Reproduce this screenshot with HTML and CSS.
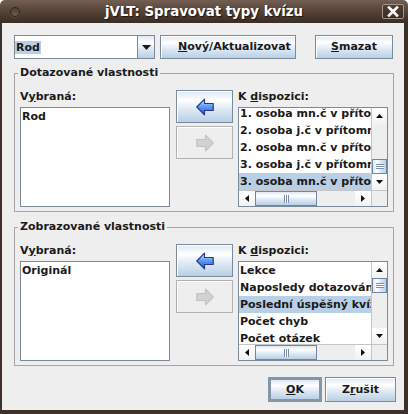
FILE: index.html
```html
<!DOCTYPE html>
<html>
<head>
<meta charset="utf-8">
<link rel="stylesheet" href="styles.css">
</head>
<body>
<div class="window">
  <div class="titlebar">
    <div class="tb-left"><span class="menu-dot"></span></div>
    <div class="title">jVLT: Spravovat typy kvízu</div>
    <div class="tb-right">
      <span class="close"><svg width="12" height="11" viewBox="0 0 12 11"><path d="M2 1.5 L10 9.5 M10 1.5 L2 9.5" stroke="#fff" stroke-width="2.6" stroke-linecap="square"/></svg></span>
    </div>
  </div>
  <div class="content">
    <div class="toolbar">
      <div class="combo">
        <div class="combo-field"><span class="sel-text">Rod</span></div>
        <div class="combo-arrow"><svg width="9" height="5" viewBox="0 0 9 5"><path d="M0 0H9L4.5 5Z" fill="#1a1a1a"/></svg></div>
      </div>
      <button class="btn btn-new"><u>N</u>ový/Aktualizovat</button>
      <button class="btn btn-del"><u>S</u>mazat</button>
    </div>

    <fieldset class="group">
      <legend>Dotazované vlastnosti</legend>
      <div class="group-body">
        <div class="col">
          <div class="col-label">V<u>y</u>braná:</div>
          <div class="list"><div class="row">Rod</div></div>
        </div>
        <div class="movers">
          <button class="mover">
            <svg width="18" height="18" viewBox="0 0 18 18"><defs><linearGradient id="ga1" x1="0" y1="0" x2="0" y2="1"><stop offset="0" stop-color="#f2f7ff"/><stop offset="0.4" stop-color="#6aa6f2"/><stop offset="1" stop-color="#1d5fcc"/></linearGradient></defs><path d="M0.8 9 L8.5 1.2 V5.5 H17.2 V12.5 H8.5 V16.8 Z" fill="url(#ga1)" stroke="#26339b" stroke-width="1.2" stroke-linejoin="round"/></svg>
          </button>
          <button class="mover disabled">
            <svg width="18" height="18" viewBox="0 0 18 18"><path d="M17.2 9 L9.5 1.2 V5.5 H0.8 V12.5 H9.5 V16.8 Z" fill="#d2d2d2" stroke="#c2c2c2" stroke-width="1.2" stroke-linejoin="round"/></svg>
          </button>
        </div>
        <div class="col">
          <div class="col-label">K <u>d</u>ispozici:</div>
          <div class="scroll">
            <div class="viewport">
              <div class="rows shift">
                <div class="row">1. osoba mn.č v přítomném čase</div>
                <div class="row">2. osoba j.č v přítomném čase</div>
                <div class="row">2. osoba mn.č v přítomném čase</div>
                <div class="row">3. osoba j.č v přítomném čase</div>
                <div class="row selected">3. osoba mn.č v přítomném čase</div>
              </div>
            </div>
            <div class="vsb">
              <div class="sb-btn"><svg width="7" height="4" viewBox="0 0 7 4"><path d="M0 4H7L3.5 0Z" fill="#111"/></svg></div>
              <div class="vtrack"><div class="vthumb at-end"><span class="grip-h"></span></div></div>
              <div class="sb-btn"><svg width="7" height="4" viewBox="0 0 7 4"><path d="M0 0H7L3.5 4Z" fill="#111"/></svg></div>
            </div>
            <div class="hsb">
              <div class="sb-btn"><svg width="4" height="7" viewBox="0 0 4 7"><path d="M4 0V7L0 3.5Z" fill="#111"/></svg></div>
              <div class="htrack"><div class="hthumb"><span class="grip-v"></span></div></div>
              <div class="sb-btn"><svg width="4" height="7" viewBox="0 0 4 7"><path d="M0 0V7L4 3.5Z" fill="#111"/></svg></div>
            </div>
            <div class="corner"></div>
          </div>
        </div>
      </div>
    </fieldset>

    <fieldset class="group group2">
      <legend>Zobrazované vlastnosti</legend>
      <div class="group-body">
        <div class="col">
          <div class="col-label">V<u>y</u>braná:</div>
          <div class="list"><div class="row">Originál</div></div>
        </div>
        <div class="movers">
          <button class="mover">
            <svg width="18" height="18" viewBox="0 0 18 18"><defs><linearGradient id="ga2" x1="0" y1="0" x2="0" y2="1"><stop offset="0" stop-color="#f2f7ff"/><stop offset="0.4" stop-color="#6aa6f2"/><stop offset="1" stop-color="#1d5fcc"/></linearGradient></defs><path d="M0.8 9 L8.5 1.2 V5.5 H17.2 V12.5 H8.5 V16.8 Z" fill="url(#ga2)" stroke="#26339b" stroke-width="1.2" stroke-linejoin="round"/></svg>
          </button>
          <button class="mover disabled">
            <svg width="18" height="18" viewBox="0 0 18 18"><path d="M17.2 9 L9.5 1.2 V5.5 H0.8 V12.5 H9.5 V16.8 Z" fill="#d2d2d2" stroke="#c2c2c2" stroke-width="1.2" stroke-linejoin="round"/></svg>
          </button>
        </div>
        <div class="col">
          <div class="col-label">K <u>d</u>ispozici:</div>
          <div class="scroll">
            <div class="viewport">
              <div class="rows">
                <div class="row">Lekce</div>
                <div class="row">Naposledy dotazováno</div>
                <div class="row selected">Poslední úspěšný kvíz</div>
                <div class="row">Počet chyb</div>
                <div class="row">Počet otázek</div>
              </div>
            </div>
            <div class="vsb">
              <div class="sb-btn"><svg width="7" height="4" viewBox="0 0 7 4"><path d="M0 4H7L3.5 0Z" fill="#111"/></svg></div>
              <div class="vtrack"><div class="vthumb"><span class="grip-h"></span></div></div>
              <div class="sb-btn"><svg width="7" height="4" viewBox="0 0 7 4"><path d="M0 0H7L3.5 4Z" fill="#111"/></svg></div>
            </div>
            <div class="hsb">
              <div class="sb-btn"><svg width="4" height="7" viewBox="0 0 4 7"><path d="M4 0V7L0 3.5Z" fill="#111"/></svg></div>
              <div class="htrack"><div class="hthumb"><span class="grip-v"></span></div></div>
              <div class="sb-btn"><svg width="4" height="7" viewBox="0 0 4 7"><path d="M0 0V7L4 3.5Z" fill="#111"/></svg></div>
            </div>
            <div class="corner"></div>
          </div>
        </div>
      </div>
    </fieldset>

    <div class="actions">
      <button class="btn btn-ok"><u>O</u>K</button>
      <button class="btn btn-cancel">Z<u>r</u>ušit</button>
    </div>
  </div>
</div>
</body>
</html>
```

FILE: styles.css
```css
* { box-sizing: border-box; }

body {
  margin: 0;
  background: #ffffff;
  font-family: "DejaVu Sans", "Liberation Sans", sans-serif;
  font-weight: bold;
  font-size: 11px;
  color: #1a1a1a;
}

.window {
  width: 408px;
  height: 414px;
  display: flex;
  flex-direction: column;
}

/* title bar */
.titlebar {
  height: 23px;
  flex: none;
  display: flex;
  align-items: center;
  background: linear-gradient(#735f52 0%, #5a483c 40%, #46372d 75%, #3b2e25 100%);
  border-radius: 5px 5px 0 0;
  color: #ffffff;
  font-size: 13.33px;
  line-height: 23px;
}
.tb-left { width: 26px; display: flex; align-items: center; }
.menu-dot {
  margin-left: 10px;
  width: 10px;
  height: 10px;
  border-radius: 50%;
  border: 1px solid #2f241d;
  background: linear-gradient(#4f3f34, #6a5a4e);
  box-shadow: 0 1px 0 rgba(255,255,255,0.12);
}
.title {
  flex: 1;
  text-align: center;
  text-shadow: 1px 1px 1px #1e1510;
}
.tb-right { width: 26px; display: flex; }
.close {
  width: 22px;
  height: 15px;
  border: 1px solid #a2948a;
  border-radius: 2px;
  background: linear-gradient(#514035, #3a2d25);
  display: flex;
  align-items: center;
  justify-content: center;
}

/* content */
.content {
  flex: 1;
  background: #eeeeee;
  border-left: 2px solid #3d3028;
  border-right: 4px solid #3d3028;
  border-bottom: 4px solid #3d3028;
  padding: 12px 0 0 12px;
}

.toolbar { display: flex; height: 24px; }

.combo {
  width: 141px;
  height: 24px;
  display: flex;
  border: 1px solid #7a8a99;
}
.combo-field { width: 122px; background: #ffffff; }
.sel-text {
  display: inline-block;
  margin-top: 5px;
  height: 13px;
  line-height: 13px;
  padding: 0 1px;
  background: #b8cfe5;
}
.combo-arrow {
  flex: 1;
  border-left: 1px solid #7a8a99;
  background: linear-gradient(#dde8f3 0%, #ffffff 30%, #dde8f3 60%, #b8cfe5 100%);
  display: flex;
  align-items: center;
  justify-content: center;
}

.btn {
  height: 24px;
  padding: 0;
  border: 1px solid #7a8a99;
  background: linear-gradient(#dde8f3 0%, #ffffff 30%, #dde8f3 60%, #b8cfe5 100%);
  box-shadow: inset 1px 1px 0 #ffffff;
  font: inherit;
  color: inherit;
  line-height: 20px;
}
.btn-new { width: 136px; margin-left: 5px; text-align: left; padding-left: 17px; }
.btn-del { width: 78px; margin-left: 19px; }

/* groups */
.group {
  margin: 7px 0 0 0;
  width: 380px;
  min-width: 0;
  border: 1px solid #a6a6a6;
  padding: 7px 5px 4px 5px;
}
.group2 { margin-top: 8px; }
.group legend {
  padding: 0 2px 2px 2px;
  margin-left: -2px;
  line-height: 13px;
}
.group-body { display: flex; }
.col { width: 150px; display: flex; flex-direction: column; }
.col-label { height: 17px; line-height: 17px; margin-bottom: 2px; }

.list {
  height: 100px;
  border: 1px solid #7a8a99;
  background: #ffffff;
}
.row {
  height: 17px;
  line-height: 17px;
  padding-left: 1px;
  white-space: nowrap;
}
.row.selected { background: #b8cfe5; }

.movers {
  width: 57px;
  margin: 2px 5px 0 6px;
  display: flex;
  flex-direction: column;
  gap: 3px;
}
.mover {
  height: 33px;
  padding: 0;
  border: 1px solid #7a8a99;
  background: linear-gradient(#dde8f3 0%, #ffffff 30%, #dde8f3 60%, #b8cfe5 100%);
  box-shadow: inset 1px 1px 0 #ffffff;
  display: flex;
  align-items: center;
  justify-content: center;
}
.mover.disabled {
  border-color: #b2b2b2;
  background: #eeeeee;
}

/* scroll pane */
.scroll {
  height: 100px;
  border: 1px solid #7a8a99;
  display: grid;
  grid-template-columns: 132px 16px;
  grid-template-rows: 82px 16px;
  background: #eeeeee;
}
.viewport { overflow: hidden; background: #ffffff; }
.rows.shift { margin-top: -3px; }

.vsb {
  display: flex;
  flex-direction: column;
  border-left: 1px solid #c5c5c5;
  background: #eeeeee;
}
.hsb {
  display: flex;
  border-top: 1px solid #c5c5c5;
  background: #eeeeee;
}
.sb-btn {
  flex: none;
  display: flex;
  align-items: center;
  justify-content: center;
  background: linear-gradient(#ffffff, #f2f2f2);
}
.vsb .sb-btn { width: 15px; height: 16px; }
.hsb .sb-btn { width: 16px; height: 15px; }
.vtrack { flex: 1; display: flex; flex-direction: column; }
.htrack { flex: 1; display: flex; }
.vthumb {
  height: 15px;
  border: 1px solid #6f86a8;
  background: linear-gradient(90deg, #dde8f3 0%, #ffffff 30%, #dde8f3 60%, #b8cfe5 100%);
  display: flex;
  align-items: center;
  justify-content: center;
}
.vthumb.at-end { margin-top: auto; }
.hthumb {
  width: 62px;
  border: 1px solid #6f86a8;
  background: linear-gradient(#dde8f3 0%, #ffffff 30%, #dde8f3 60%, #b8cfe5 100%);
  display: flex;
  align-items: center;
  justify-content: center;
}
.grip-h {
  width: 8px;
  height: 5px;
  background: repeating-linear-gradient(#7a8fb0 0 1px, #ffffff 1px 2px);
}
.grip-v {
  width: 5px;
  height: 8px;
  background: repeating-linear-gradient(90deg, #7a8fb0 0 1px, #ffffff 1px 2px);
}
.corner { background: #eeeeee; border-left: 1px solid #c5c5c5; border-top: 1px solid #c5c5c5; }

/* dialog buttons */
.actions {
  display: flex;
  justify-content: flex-end;
  gap: 3px;
  margin-top: 11px;
  padding-right: 8px;
}
.btn-ok {
  width: 54px;
  height: 25px;
  border: 3px solid #8796a5;
  box-shadow: none;
  line-height: 19px;
}
.btn-cancel { width: 71px; height: 25px; line-height: 21px; }
```
